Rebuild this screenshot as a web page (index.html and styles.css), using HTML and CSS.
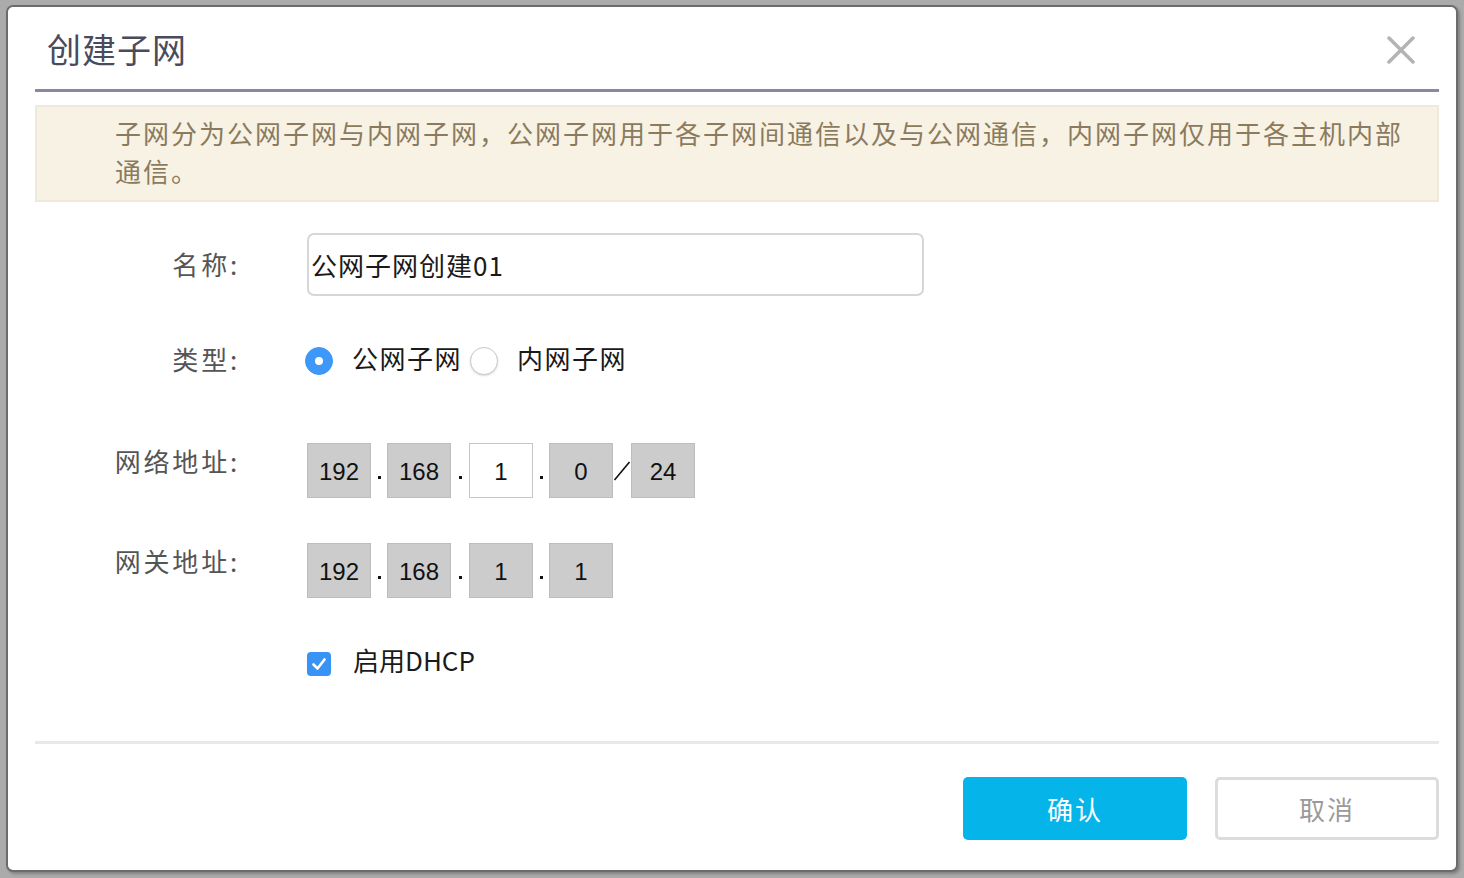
FILE: index.html
```html
<!DOCTYPE html>
<html lang="zh-CN">
<head>
<meta charset="utf-8">
<title>创建子网</title>
<link rel="stylesheet" href="styles.css">
</head>
<body>
<div class="dialog">
  <div class="header">
    <h1 class="title">创建子网</h1>
    <svg class="close" width="28" height="28" viewBox="0 0 28 28"><path d="M2 2 L26 26 M26 2 L2 26" stroke="#b3b3b3" stroke-width="3.5" stroke-linecap="round" fill="none"/></svg>
  </div>
  <div class="notice">子网分为公网子网与内网子网，公网子网用于各子网间通信以及与公网通信，内网子网仅用于各主机内部<br>通信。</div>
  <div class="form">
    <div class="row row-name">
      <div class="label">名称:</div>
      <div class="input">公网子网创建01</div>
    </div>
    <div class="row row-type">
      <div class="label">类型:</div>
      <div class="radios">
        <span class="radio checked"></span><span class="radio-label">公网子网</span>
        <span class="radio"></span><span class="radio-label">内网子网</span>
      </div>
    </div>
    <div class="row row-ip">
      <div class="label">网络地址:</div>
      <div class="ip">
        <span class="octet">192</span><span class="sep"><i class="dot"></i></span>
        <span class="octet">168</span><span class="sep wide"><i class="dot"></i></span>
        <span class="octet editable">1</span><span class="sep"><i class="dot"></i></span>
        <span class="octet">0</span><span class="sep wide"><svg width="18" height="55" viewBox="0 0 18 55"><path d="M1.5 37 L16.5 19" stroke="#111" stroke-width="1.6" fill="none"/></svg></span>
        <span class="octet">24</span>
      </div>
    </div>
    <div class="row row-ip row-gw">
      <div class="label">网关地址:</div>
      <div class="ip">
        <span class="octet">192</span><span class="sep"><i class="dot"></i></span>
        <span class="octet">168</span><span class="sep wide"><i class="dot"></i></span>
        <span class="octet">1</span><span class="sep"><i class="dot"></i></span>
        <span class="octet">1</span>
      </div>
    </div>
    <div class="row row-dhcp">
      <div class="label"></div>
      <div class="check-wrap">
        <span class="checkbox"><svg width="24" height="24" viewBox="0 0 24 24"><path d="M6.5 12.5 L10.5 16.5 L17.5 7.5" stroke="#fff" stroke-width="2.6" stroke-linecap="round" stroke-linejoin="round" fill="none"/></svg></span>
        <span class="check-label">启用DHCP</span>
      </div>
    </div>
  </div>
  <div class="divider"></div>
  <div class="footer">
    <button class="btn btn-primary">确认</button>
    <button class="btn btn-default">取消</button>
  </div>
</div>
</body>
</html>
```

FILE: styles.css
```css
html, body {
  margin: 0;
  padding: 0;
}
body {
  background: #ababab;
  width: 1464px;
  height: 878px;
  overflow: hidden;
  font-family: "Noto Sans CJK SC", "Noto Sans", sans-serif;
}
.dialog {
  margin: 5px 0 0 6px;
  width: 1452px;
  height: 867px;
  box-sizing: border-box;
  border: 2px solid #6c6c6c;
  border-radius: 7px;
  background: #fff;
  box-shadow: 2px 2px 3px rgba(0, 0, 0, 0.25);
  padding: 0 17px 0 27px;
}
.header {
  height: 82px;
  display: flex;
  align-items: center;
  justify-content: space-between;
  border-bottom: 3px solid #8a879e;
  padding: 0 24px 0 12px;
}
.title {
  margin: 0;
  font-weight: normal;
  font-size: 34px;
  letter-spacing: 1px;
  color: #4b4a5c;
  line-height: 40px;
  padding-top: 2px;
}
.close {
  display: block;
  margin-top: 4px;
}
.notice {
  margin-top: 13px;
  height: 97px;
  box-sizing: border-box;
  background: #f8f2e4;
  border: 2px solid #eee9dc;
  padding: 7px 10px 0 78px;
  font-size: 26px;
  letter-spacing: 2px;
  line-height: 38px;
  color: #8b7b5e;
  white-space: nowrap;
}
.form {
  display: flex;
  flex-direction: column;
}
.row {
  display: flex;
  align-items: center;
}
.label {
  width: 205px;
  flex: none;
  text-align: right;
  font-size: 26px;
  letter-spacing: 2.8px;
  color: #555;
  margin-right: 67px;
}
.row-name {
  margin-top: 31px;
  height: 63px;
}
.row-name .label {
  line-height: 63px;
  padding-bottom: 2px;
}
.input {
  width: 617px;
  height: 63px;
  box-sizing: border-box;
  border: 2px solid #d6d6d6;
  border-radius: 7px;
  padding-left: 2px;
  font-size: 26px;
  line-height: 59px;
  letter-spacing: 1px;
  color: #1a1a1a;
}
.row-type {
  margin-top: 44px;
  height: 40px;
}
.row-type .label {
  padding-bottom: 4px;
}
.radios {
  display: flex;
  align-items: center;
  margin-left: -2px;
  padding-top: 2px;
}
.radio {
  width: 28px;
  height: 28px;
  box-sizing: border-box;
  border-radius: 50%;
  border: 1px solid #c9c9c9;
  background: #fff;
  box-shadow: 0 1px 2px rgba(0, 0, 0, 0.15);
  margin-right: 19px;
  position: relative;
}
.radio.checked {
  background: #3d98f7;
  border-color: #3d98f7;
  box-shadow: none;
}
.radio.checked::after {
  content: "";
  position: absolute;
  left: 9px;
  top: 9px;
  width: 8px;
  height: 8px;
  border-radius: 50%;
  background: #fff;
}
.radio-label {
  font-size: 26px;
  letter-spacing: 1.5px;
  color: #1a1a1a;
  margin-right: 8px;
  line-height: 36px;
  margin-top: -7px;
}
.row-ip {
  margin-top: 63px;
  height: 55px;
  align-items: flex-start;
}
.row-gw {
  margin-top: 45px;
}
.row-ip .label {
  line-height: 36px;
}
.ip {
  display: flex;
  align-items: stretch;
  height: 55px;
}
.octet {
  width: 64px;
  height: 55px;
  box-sizing: border-box;
  background: #cccccc;
  border: 1px solid #bdbdbd;
  font-family: "Liberation Sans", Arial, sans-serif;
  font-size: 24px;
  color: #111;
  display: flex;
  align-items: center;
  justify-content: center;
  padding-top: 3px;
}
.octet.editable {
  background: #fff;
  border: 1px solid #c6c6c6;
}
.sep {
  width: 16px;
  display: flex;
  align-items: center;
  justify-content: center;
}
.sep.wide {
  width: 18px;
}
.dot {
  display: block;
  width: 3px;
  height: 3px;
  background: #111;
  margin-top: 14px;
}
.row-dhcp {
  margin-top: 44px;
  height: 40px;
}
.check-wrap {
  display: flex;
  align-items: center;
}
.checkbox {
  width: 24px;
  height: 24px;
  border-radius: 4px;
  background: #3893f5;
  display: block;
  margin-top: 4px;
  margin-right: 22px;
}
.checkbox svg {
  display: block;
}
.check-label {
  font-size: 26px;
  color: #1a1a1a;
  line-height: 36px;
  margin-top: -4px;
}
.divider {
  margin-top: 59px;
  height: 3px;
  background: #e8e8e8;
}
.footer {
  margin-top: 33px;
  display: flex;
  justify-content: flex-end;
  gap: 28px;
}
.btn {
  width: 224px;
  height: 63px;
  box-sizing: border-box;
  border-radius: 5px;
  font-family: "Noto Sans CJK SC", "Noto Sans", sans-serif;
  font-size: 26px;
  letter-spacing: 2px;
  padding: 0;
  cursor: pointer;
}
.btn-primary {
  background: #05b5ea;
  border: none;
  color: #fff;
}
.btn-default {
  background: #fff;
  border: 3px solid #dcdcdc;
  color: #9a9a9a;
}
```
